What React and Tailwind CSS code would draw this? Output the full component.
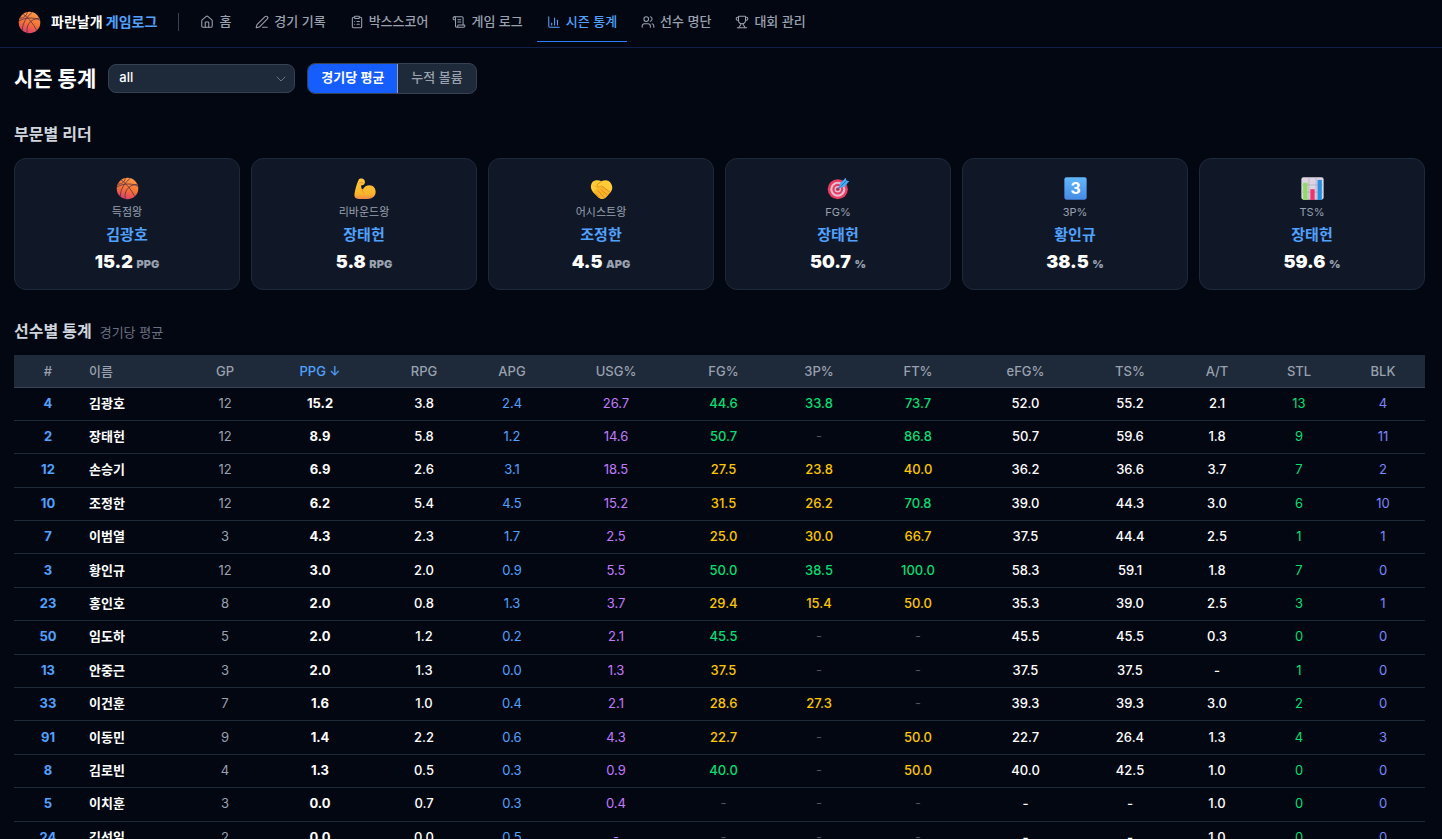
import {
  ChartColumn,
  ChevronDown,
  ClipboardList,
  House,
  PenLine,
  ScrollText,
  Trophy,
  Users,
} from 'lucide-react'

const NAV_ITEMS = [
  { label: '홈', icon: House },
  { label: '경기 기록', icon: PenLine },
  { label: '박스스코어', icon: ClipboardList },
  { label: '게임 로그', icon: ScrollText },
  { label: '시즌 통계', icon: ChartColumn, active: true },
  { label: '선수 명단', icon: Users },
  { label: '대회 관리', icon: Trophy },
]

const LEADERS = [
  { icon: Basketball, label: '득점왕', name: '김광호', value: '15.2', unit: 'PPG' },
  { icon: Muscle, label: '리바운드왕', name: '장태헌', value: '5.8', unit: 'RPG' },
  { icon: Handshake, label: '어시스트왕', name: '조정한', value: '4.5', unit: 'APG' },
  { icon: Target, label: 'FG%', name: '장태헌', value: '50.7', unit: '%' },
  { icon: KeycapThree, label: '3P%', name: '황인규', value: '38.5', unit: '%' },
  { icon: BarChart, label: 'TS%', name: '장태헌', value: '59.6', unit: '%' },
]

const COLUMNS = [
  { key: '#', width: 'w-[68px]' },
  { key: '이름', width: 'w-[107px]' },
  { key: 'GP', width: 'w-[72px]' },
  { key: 'PPG', width: 'w-[118px]' },
  { key: 'RPG', width: 'w-[90px]' },
  { key: 'APG', width: 'w-[86px]' },
  { key: 'USG%', width: 'w-[122px]' },
  { key: 'FG%', width: 'w-[93px]' },
  { key: '3P%', width: 'w-[98px]' },
  { key: 'FT%', width: 'w-[100px]' },
  { key: 'eFG%', width: 'w-[115px]' },
  { key: 'TS%', width: 'w-[94px]' },
  { key: 'A/T', width: 'w-[80px]' },
  { key: 'STL', width: 'w-[84px]' },
  { key: 'BLK', width: 'w-[84px]' },
]

// number, name, GP, PPG, RPG, APG, USG, FG, 3P, FT, eFG, TS, A/T, STL, BLK
const PLAYERS = [
  ['4', '김광호', '12', '15.2', '3.8', '2.4', '26.7', '44.6', '33.8', '73.7', '52.0', '55.2', '2.1', '13', '4'],
  ['2', '장태헌', '12', '8.9', '5.8', '1.2', '14.6', '50.7', '-', '86.8', '50.7', '59.6', '1.8', '9', '11'],
  ['12', '손승기', '12', '6.9', '2.6', '3.1', '18.5', '27.5', '23.8', '40.0', '36.2', '36.6', '3.7', '7', '2'],
  ['10', '조정한', '12', '6.2', '5.4', '4.5', '15.2', '31.5', '26.2', '70.8', '39.0', '44.3', '3.0', '6', '10'],
  ['7', '이범열', '3', '4.3', '2.3', '1.7', '2.5', '25.0', '30.0', '66.7', '37.5', '44.4', '2.5', '1', '1'],
  ['3', '황인규', '12', '3.0', '2.0', '0.9', '5.5', '50.0', '38.5', '100.0', '58.3', '59.1', '1.8', '7', '0'],
  ['23', '홍인호', '8', '2.0', '0.8', '1.3', '3.7', '29.4', '15.4', '50.0', '35.3', '39.0', '2.5', '3', '1'],
  ['50', '임도하', '5', '2.0', '1.2', '0.2', '2.1', '45.5', '-', '-', '45.5', '45.5', '0.3', '0', '0'],
  ['13', '안중근', '3', '2.0', '1.3', '0.0', '1.3', '37.5', '-', '-', '37.5', '37.5', '-', '1', '0'],
  ['33', '이건훈', '7', '1.6', '1.0', '0.4', '2.1', '28.6', '27.3', '-', '39.3', '39.3', '3.0', '2', '0'],
  ['91', '이동민', '9', '1.4', '2.2', '0.6', '4.3', '22.7', '-', '50.0', '22.7', '26.4', '1.3', '4', '3'],
  ['8', '김로빈', '4', '1.3', '0.5', '0.3', '0.9', '40.0', '-', '50.0', '40.0', '42.5', '1.0', '0', '0'],
  ['5', '이치훈', '3', '0.0', '0.7', '0.3', '0.4', '-', '-', '-', '-', '-', '1.0', '0', '0'],
  ['24', '김석일', '2', '0.0', '0.0', '0.5', '-', '-', '-', '-', '-', '-', '1.0', '0', '0'],
]

const shootingColor = (value, good) => {
  if (value === '-') return 'text-gray-600'
  return Number(value) >= good ? 'font-medium text-green-400' : 'font-medium text-yellow-400'
}

const cellClass = (index, value) => {
  switch (index) {
    case 0:
      return 'font-bold text-blue-400'
    case 1:
      return 'text-left font-semibold'
    case 2:
      return 'text-gray-400'
    case 3:
      return 'font-bold'
    case 5:
      return 'text-blue-400'
    case 6:
      return 'text-purple-400'
    case 7:
      return shootingColor(value, 40)
    case 8:
      return shootingColor(value, 33)
    case 9:
      return shootingColor(value, 70)
    case 13:
      return 'text-green-400'
    case 14:
      return 'text-indigo-400'
    default:
      return 'font-medium'
  }
}

function Basketball({ className }) {
  return (
    <svg viewBox="0 0 32 32" className={className} aria-hidden="true">
      <defs>
        <linearGradient id="ball" x1="0.65" y1="0" x2="0.35" y2="1">
          <stop offset="0" stopColor="#ff9a45" />
          <stop offset="0.55" stopColor="#f47138" />
          <stop offset="1" stopColor="#dd3d6c" />
        </linearGradient>
      </defs>
      <circle cx="16" cy="16" r="15" fill="url(#ball)" />
      <g fill="none" stroke="#5e3440" strokeWidth="1.2">
        <path d="M7 4C14 9 21 17 26 27" />
        <path d="M1 14C10 9 21 8 31 13" />
        <path d="M20 1.5C11 9 6 18 6 27" />
        <path d="M13 31C11 22 15 11 30 10" />
        <path d="M2 10C8 10 12 7 13 1.5" />
      </g>
    </svg>
  )
}

function Muscle({ className }) {
  return (
    <svg viewBox="0 0 32 32" className={className} aria-hidden="true">
      <defs>
        <linearGradient id="arm" x1="0" y1="0" x2="0" y2="1">
          <stop offset="0" stopColor="#ffc83d" />
          <stop offset="0.75" stopColor="#ffb52b" />
          <stop offset="1" stopColor="#f08a4a" />
        </linearGradient>
      </defs>
      <path
        d="M8 3.5C9.5 1.5 14.5 1.5 16 4.5C17.5 8 16 11 13 11.5L11.5 11.5C11 14 11.5 16 13.5 17.5C15.5 13.5 19 11.5 23 11.5C28 11.5 31.5 15.5 31.5 20.5C31.5 26.5 27 30.5 20 30.5H8C3.5 30.5 1.5 28 2 24C3 17 5 10 8 3.5Z"
        fill="url(#arm)"
      />
      <path
        d="M9 8.5C10.5 7.5 12 7.5 14 8.5M13.5 17.5C13 19.5 14 21.5 15.5 22.5"
        fill="none"
        stroke="#e5892e"
        strokeWidth="1.3"
      />
    </svg>
  )
}

function Handshake({ className }) {
  return (
    <svg viewBox="0 0 32 32" className={className} aria-hidden="true">
      <path
        d="M7 5C10 4 13 4.5 16 6C19 4.5 23 4 26 5.5C29 7.5 31 11 31 15C31 18 29.5 20 28 22L22 28.5C19 31 14.5 31 12 29L4 21C1 17 .5 13 2 9.5C3 7 5 5.5 7 5Z"
        fill="#ffcb36"
      />
      <path d="M2 11L10 15L5 21L13 29C16 31 19 30.5 22 28L28 21L18 13L12 16L9.5 12Z" fill="#f9b428" />
      <path
        d="M16 6L10 10.5C9 14 12.5 15 16 12.5L28 21M15 17L24 25M11 19L20 29M8 23L13 28"
        fill="none"
        stroke="#da861f"
        strokeWidth="1.2"
      />
    </svg>
  )
}

function Target({ className }) {
  return (
    <svg viewBox="0 0 32 32" className={className} aria-hidden="true">
      <circle cx="15" cy="17" r="14" fill="#ea3b61" />
      <circle cx="15" cy="17" r="10.5" fill="#e3bfd0" />
      <circle cx="15" cy="17" r="7.5" fill="#e83a62" />
      <circle cx="15" cy="17" r="4.5" fill="#e3bfd0" />
      <circle cx="15" cy="17" r="2.5" fill="#c9305c" />
      <path d="M15 17L22 10" stroke="#355a91" strokeWidth="1.5" />
      <path d="M18 9L24 3L26 1L27 5L31 6L29 8L24 14L17 15Z" fill="#45aaf2" />
      <path d="M19 13L27 5" stroke="#1976bd" strokeWidth="1.3" />
    </svg>
  )
}

function KeycapThree({ className }) {
  return (
    <svg viewBox="0 0 32 32" className={className} aria-hidden="true">
      <defs>
        <linearGradient id="keycap" x1="0" y1="0" x2="0" y2="1">
          <stop offset="0" stopColor="#62b7fb" />
          <stop offset="1" stopColor="#468be5" />
        </linearGradient>
      </defs>
      <rect x="0.5" y="0.5" width="31" height="31" rx="3" fill="url(#keycap)" />
      <text x="16" y="24" textAnchor="middle" fontSize="22" fontWeight="700" fill="#fff">
        3
      </text>
    </svg>
  )
}

function BarChart({ className }) {
  return (
    <svg viewBox="0 0 32 32" className={className} aria-hidden="true">
      <rect x="0.5" y="0.5" width="31" height="31" rx="3" fill="#ddd5e4" />
      <path d="M0 11H32M0 21H32M11 0V32M21 0V32" stroke="#b2a7bd" strokeWidth="1" />
      <rect x="3" y="8" width="6" height="24" fill="#8ddc65" />
      <rect x="13" y="17" width="6" height="15" fill="#ec3470" />
      <rect x="23" y="4" width="6" height="28" fill="#2691e2" />
    </svg>
  )
}

function Header() {
  return (
    <header className="flex h-12 items-start border-b border-blue-950/80 px-[18px]">
      <a href="#home" className="flex h-11 items-center gap-2.5 text-sm font-bold">
        <Basketball className="size-[23px]" />
        <span>
          파란날개 <span className="text-blue-400">게임로그</span>
        </span>
      </a>
      <div className="mt-[13px] ml-[21px] h-[18px] w-px bg-gray-700" />
      <nav className="ml-[11px] flex h-[42px] gap-1 text-[13px] font-medium text-gray-400">
        {NAV_ITEMS.map(({ label, icon: Icon, active }) => (
          <a
            key={label}
            href="#"
            className={
              active
                ? 'flex items-center gap-[5px] border-b border-blue-500 px-2.5 pt-0.5 text-blue-400'
                : 'flex items-center gap-[5px] border-b border-transparent px-2.5 pt-0.5'
            }
          >
            <Icon className="size-3.5" strokeWidth={1.8} />
            {label}
          </a>
        ))}
      </nav>
    </header>
  )
}

function Toolbar() {
  return (
    <div className="flex items-center gap-3">
      <h1 className="text-[21px] leading-[30px] font-bold">시즌 통계</h1>
      <div className="grid w-[187px] items-center">
        <select
          aria-label="시즌"
          className="col-start-1 row-start-1 h-[29px] appearance-none rounded-lg border border-gray-700 bg-gray-800 px-2.5 pb-0.5 text-[13px] font-medium"
        >
          <option>all</option>
        </select>
        <ChevronDown
          className="pointer-events-none col-start-1 row-start-1 mr-1.5 size-4 justify-self-end text-gray-500"
          strokeWidth={1.5}
        />
      </div>
      <div className="flex h-[31px] overflow-hidden rounded-lg border border-gray-700 bg-gray-800 text-[13px]">
        <button className="border-r border-gray-400 bg-blue-600 px-[13px] pb-0.5 font-semibold">경기당 평균</button>
        <button className="px-[13px] pb-0.5 font-medium text-gray-400">누적 볼륨</button>
      </div>
    </div>
  )
}

function LeaderCard({ icon: Icon, label, name, value, unit }) {
  return (
    <div className="flex h-[132px] flex-col items-center rounded-xl border border-gray-800 bg-gray-900 pt-[18px]">
      <Icon className="size-[23px]" />
      <p className="mt-1 text-[11px] leading-4 text-gray-400">{label}</p>
      <p className="mt-1 text-[15px] leading-[22px] font-semibold text-blue-400">{name}</p>
      <p className="mt-0.5 text-lg leading-7 font-black">
        {value} <span className="text-[11px] text-gray-400">{unit}</span>
      </p>
    </div>
  )
}

function StatsTable() {
  return (
    <table className="mt-[11px] h-[500px] w-full table-fixed border-collapse text-center text-[13px] leading-5">
      <thead>
        <tr className="h-8 border-b border-gray-700 bg-gray-800 text-gray-400">
          {COLUMNS.map(({ key, width }) => (
            <th
              key={key}
              scope="col"
              className={`${width} px-[7px] font-medium ${key === '이름' ? 'text-left' : ''} ${key === 'PPG' ? 'text-blue-400' : ''}`}
            >
              {key === 'PPG' ? 'PPG ↓' : key}
            </th>
          ))}
        </tr>
      </thead>
      <tbody>
        {PLAYERS.map((player) => (
          <tr key={player[0]} className="border-b border-gray-800">
            {player.map((value, index) => (
              <td key={index} className={`px-[7px] pb-0.5 ${cellClass(index, value)}`}>
                {value}
              </td>
            ))}
          </tr>
        ))}
      </tbody>
    </table>
  )
}

export default function App() {
  return (
    <div className="h-screen overflow-y-auto bg-gray-950 font-['Inter','Noto_Sans_CJK_KR',sans-serif] text-white [scrollbar-width:none]">
      <Header />
      <main className="pt-[15px] pr-[17px] pb-8 pl-[14px]">
        <Toolbar />
        <h2 className="mt-7 text-base leading-6 font-semibold text-gray-300">부문별 리더</h2>
        <div className="mt-3 grid grid-cols-6 gap-[11px]">
          {LEADERS.map((leader) => (
            <LeaderCard key={leader.label} {...leader} />
          ))}
        </div>
        <h2 className="mt-[29px] text-base leading-6 font-semibold text-gray-300">
          선수별 통계 <span className="ml-1 text-[13px] font-normal text-gray-500">경기당 평균</span>
        </h2>
        <StatsTable />
      </main>
    </div>
  )
}
